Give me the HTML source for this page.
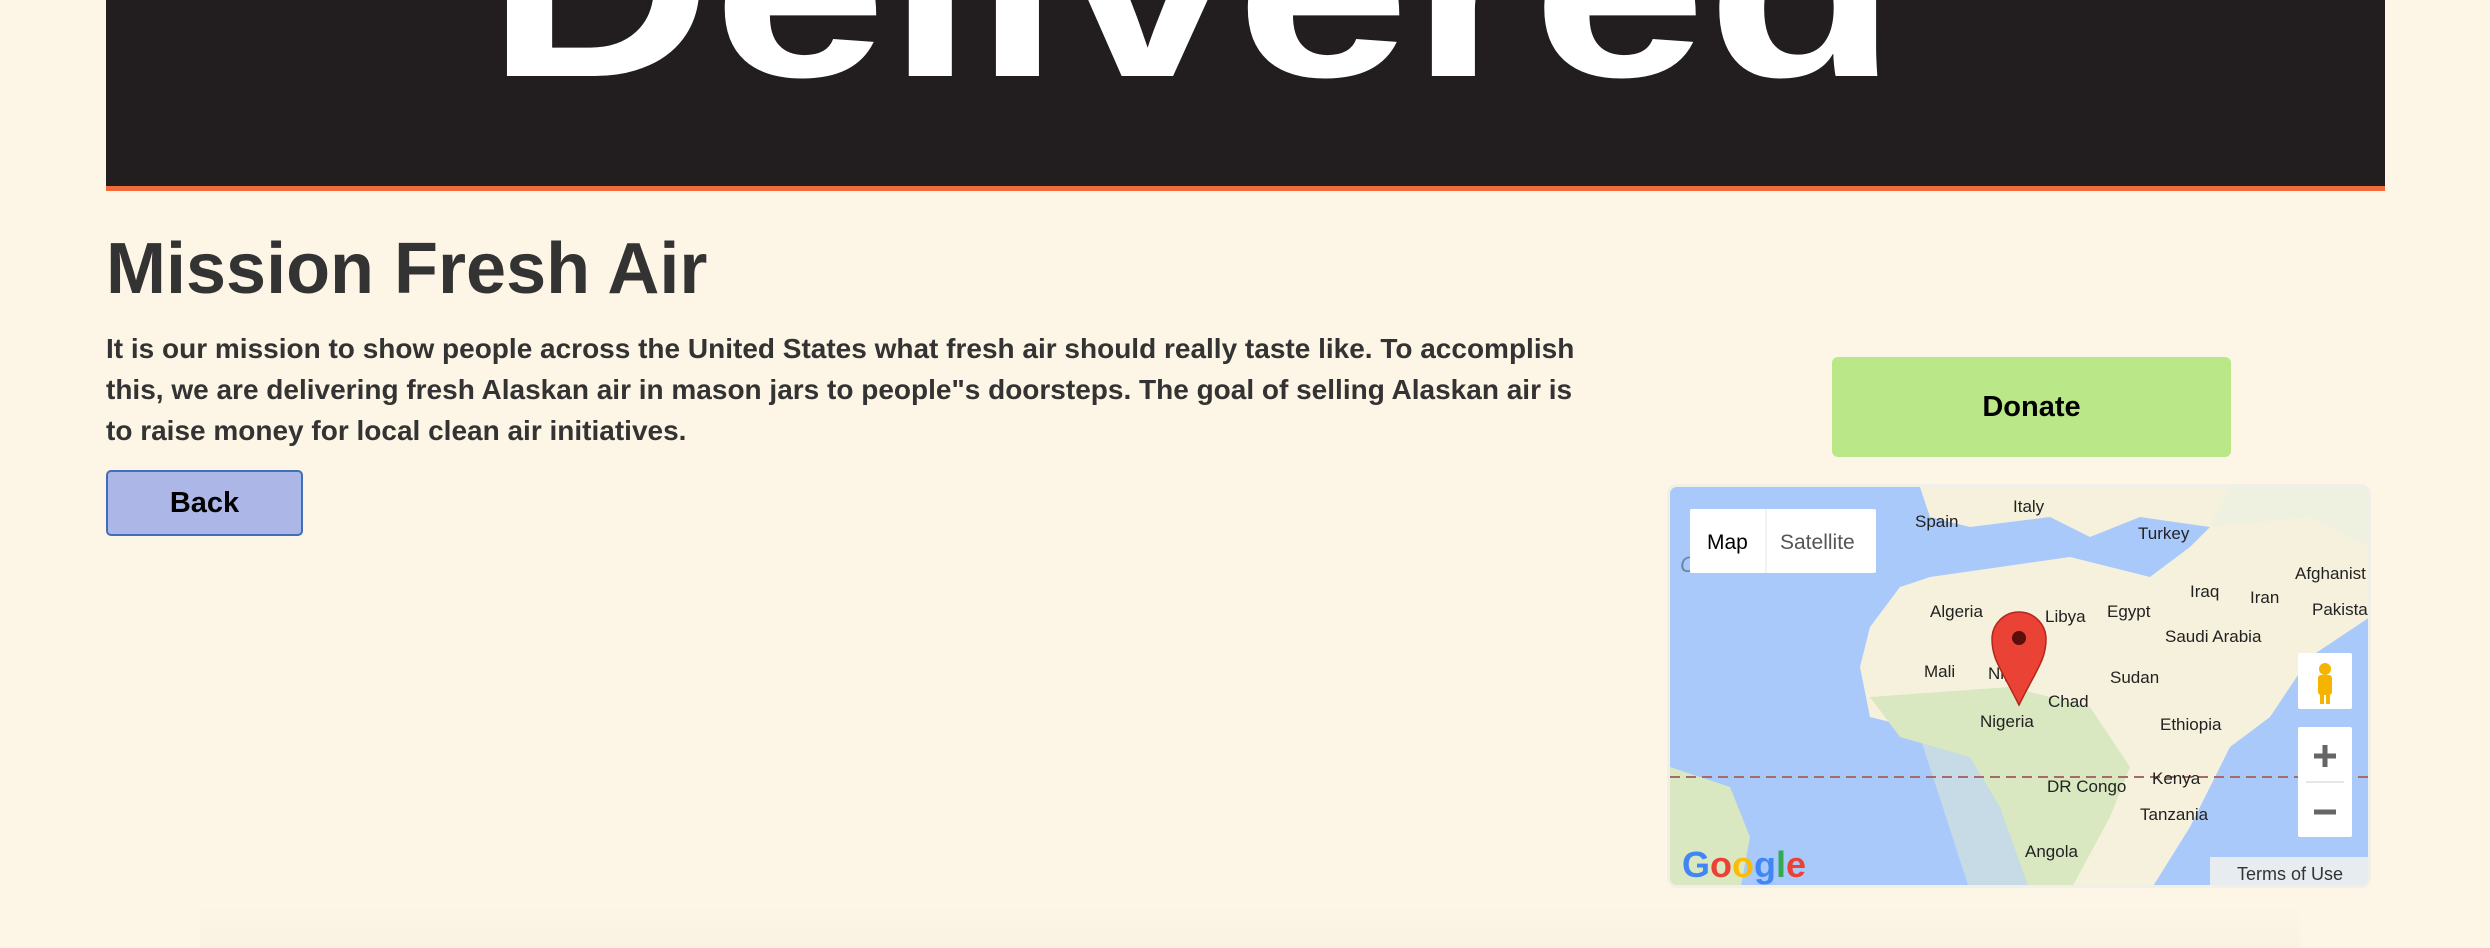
<!DOCTYPE html>
<html><head><meta charset="utf-8"><style>
html,body{margin:0;padding:0;}
body{width:2490px;height:948px;background:#fdf5e5;position:relative;overflow:hidden;font-family:"Liberation Sans",Arial,sans-serif;color:#333;}
.hdr{position:absolute;left:106px;top:0;width:2279px;height:186px;background:#221e1f;}
.line{position:absolute;left:106px;top:186px;width:2279px;height:5px;background:#f26a3a;}
h1{position:absolute;left:106px;top:228px;margin:0;font-size:72px;font-weight:bold;color:#333;letter-spacing:0px;}
p{position:absolute;left:106px;top:328px;width:1500px;margin:0;font-size:28px;font-weight:bold;line-height:41px;color:#333;}
.back{position:absolute;left:106px;top:470px;width:197px;height:66px;background:#acb7e8;border:2px solid #3f6fb8;border-radius:5px;box-sizing:border-box;font-size:29px;font-weight:bold;color:#000;display:flex;align-items:center;justify-content:center;}
.donate{position:absolute;left:1832px;top:357px;width:399px;height:100px;background:#bae888;border-radius:6px;font-size:29px;font-weight:bold;color:#000;display:flex;align-items:center;justify-content:center;}
.map{position:absolute;left:1667px;top:484px;width:704px;height:404px;border-radius:10px;overflow:hidden;background:#a9c9fb;border:3px solid #f0efe8;box-sizing:border-box;}
.shadow{position:absolute;left:200px;top:905px;width:2100px;height:43px;background:linear-gradient(#fdf5e5,#f9f1e1);}
</style></head><body>
<div class="hdr">
<svg width="2279" height="186" style="position:absolute;left:0;top:0">
<text x="380" y="76" font-family="Liberation Sans,sans-serif" font-weight="bold" font-size="255" fill="#fff" textLength="1412" lengthAdjust="spacingAndGlyphs">Delivered</text>
</svg>
</div>
<div class="line"></div>
<h1>Mission Fresh Air</h1>
<p>It is our mission to show people across the United States what fresh air should really taste like. To accomplish this, we are delivering fresh Alaskan air in mason jars to people"s doorsteps. The goal of selling Alaskan air is to raise money for local clean air initiatives.</p>
<div class="back">Back</div>
<div class="donate">Donate</div>
<div class="map">
<svg width="704" height="404" viewBox="0 0 704 404" style="position:absolute;left:0;top:0">
<path d="M250 0 L700 0 L700 130 L640 170 L600 230 L560 260 L540 300 L520 340 L480 404 L370 404 L350 320 L330 260 L300 240 L240 240 L200 230 L190 180 L200 140 L230 100 L260 90 L330 80 L400 70 L480 90 L520 60 L540 40 L470 30 L420 50 L380 30 L300 40 L260 30 Z" fill="#f6f1dc"/>
<path d="M250 250 L330 250 L360 320 L390 404 L300 404 Z" fill="#e4eed0" opacity=".5"/>
<path d="M200 210 L340 200 L420 220 L460 280 L440 330 L400 404 L360 404 L330 320 L300 270 L230 250 Z" fill="#d9e8c0"/>
<path d="M0 280 L60 300 L80 350 L70 404 L0 404 Z" fill="#d9e8c0"/>
<path d="M540 40 L640 30 L700 60 L700 0 L560 0 Z" fill="#eef0e0"/>
<line x1="0" y1="290" x2="704" y2="290" stroke="#a56a6a" stroke-width="2" stroke-dasharray="10,6"/>
<g font-family="Liberation Sans,sans-serif" font-size="17" fill="#222">
<text x="245" y="40">Spain</text><text x="343" y="25">Italy</text><text x="468" y="52">Turkey</text>
<text x="260" y="130">Algeria</text><text x="375" y="135">Libya</text><text x="437" y="130">Egypt</text>
<text x="520" y="110">Iraq</text><text x="580" y="116">Iran</text><text x="625" y="92">Afghanist</text><text x="642" y="128">Pakista</text>
<text x="495" y="155">Saudi Arabia</text><text x="254" y="190">Mali</text><text x="318" y="192">Niger</text>
<text x="440" y="196">Sudan</text><text x="378" y="220">Chad</text><text x="310" y="240">Nigeria</text>
<text x="490" y="243">Ethiopia</text><text x="482" y="297">Kenya</text><text x="377" y="305">DR Congo</text>
<text x="470" y="333">Tanzania</text><text x="355" y="370">Angola</text>
</g>
<text x="10" y="85" font-family="Liberation Sans,sans-serif" font-style="italic" font-size="22" fill="#6d84a6" letter-spacing="3">Ocean</text>
<rect x="20" y="22" width="186" height="64" rx="2" fill="#fff"/>
<line x1="96" y1="22" x2="96" y2="86" stroke="#e6e6e6"/>
<text x="37" y="62" font-family="Liberation Sans,sans-serif" font-size="21" fill="#000">Map</text>
<text x="110" y="62" font-family="Liberation Sans,sans-serif" font-size="21" fill="#555">Satellite</text>
<path d="M349 218 C330 180 322 172 322 152 A27 27 0 0 1 376 152 C376 172 368 180 349 218 Z" fill="#ea4335" stroke="#b3261e" stroke-width="1.5"/>
<circle cx="349" cy="151" r="7" fill="#5a0f0a"/>
<rect x="628" y="166" width="54" height="56" rx="2" fill="#fff"/>
<circle cx="655" cy="182" r="6" fill="#f5b400"/><rect x="648" y="188" width="14" height="20" rx="3" fill="#f5b400"/><rect x="650" y="205" width="4" height="12" fill="#f5b400"/><rect x="656" y="205" width="4" height="12" fill="#f5b400"/>
<rect x="628" y="240" width="54" height="110" rx="2" fill="#fff"/>
<line x1="636" y1="295" x2="674" y2="295" stroke="#e6e6e6" stroke-width="2"/>
<path d="M655 258 V280 M644 269 H666" stroke="#666" stroke-width="5"/>
<path d="M644 325 H666" stroke="#666" stroke-width="5"/>
<text x="12" y="390" font-family="Liberation Sans,sans-serif" font-weight="bold" font-size="36"><tspan fill="#4285f4">G</tspan><tspan fill="#ea4335">o</tspan><tspan fill="#fbbc05">o</tspan><tspan fill="#4285f4">g</tspan><tspan fill="#34a853">l</tspan><tspan fill="#ea4335">e</tspan></text>
<rect x="540" y="370" width="164" height="34" fill="#f2f2ee" opacity=".85"/>
<text x="567" y="393" font-family="Liberation Sans,sans-serif" font-size="18" fill="#333">Terms of Use</text>
</svg>
</div>
<div class="shadow"></div>
</body></html>
